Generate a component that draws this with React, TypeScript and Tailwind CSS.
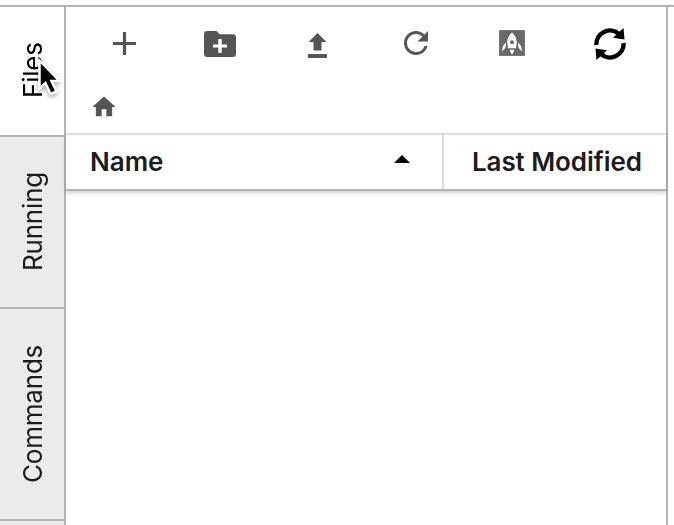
import React from "react";

function Tab({ label, className, textClass }: { label: string; className: string; textClass: string }) {
  return (
    <div className={`flex w-full shrink-0 justify-center border-b-2 border-[#b3b3b3] ${className}`}>
      <span className={`rotate-180 whitespace-nowrap text-[26px] leading-[32px] [writing-mode:vertical-rl] ${textClass}`}>{label}</span>
    </div>
  );
}

function Toolbar() {
  return (
    <div className="ml-[10px] grid h-[74px] w-[583px] shrink-0 grid-cols-6 items-center justify-items-center pb-[2px] text-[#555]">
      <svg className="mr-px h-[23px] w-[23px]" viewBox="0 0 23 23" fill="currentColor">
        <path d="M9.9 0h3.2v9.9H23v3.2h-9.9V23H9.9v-9.9H0V9.9h9.9z" />
      </svg>
      <svg className="mt-[2px] mr-[4px] h-[26px] w-[32px]" viewBox="0 0 32 26" fill="currentColor">
        <path fillRule="evenodd" d="M3 0h9.5l3.3 3.3H29a3 3 0 0 1 3 3V23a3 3 0 0 1-3 3H3a3 3 0 0 1-3-3V3a3 3 0 0 1 3-3zM14.3 8v5.4H9v3.2h5.3V22h3.4v-5.4H23v-3.2h-5.3V8z" />
      </svg>
      <svg className="mt-[4px] mr-[2px] h-[25px] w-[19px]" viewBox="0 0 19 25" fill="currentColor">
        <path d="M9.5 0 18.5 9h-5v8.6h-8V9h-5zM0 21h19v4H0z" />
      </svg>
      <svg className="h-[36px] w-[36px]" viewBox="0 0 24 24" fill="currentColor">
        <path d="M17.65 6.35A7.958 7.958 0 0 0 12 4c-4.42 0-7.99 3.58-7.99 8s3.57 8 7.99 8c3.73 0 6.84-2.55 7.73-6h-2.08A5.99 5.99 0 0 1 12 18c-3.31 0-6-2.69-6-6s2.69-6 6-6c1.66 0 3.14.69 4.22 1.78L13 11h7V4l-2.35 2.35z" />
      </svg>
      <svg className="mr-[2px] h-[26px] w-[26px]" viewBox="0 0 26 26">
        <path fill="#696969" stroke="#777" d="M.5.5h25v25H.5z" />
        <path fill="#fff" d="M13 2.5C9.8 5.5 8.2 9 8.2 12.5L9 18.2h8l.8-5.7C17.8 9 16.2 5.5 13 2.5zM7 12.8C4.2 14.7 3.1 17.5 2.9 21.5L6.6 17.7zM19 12.8c2.8 1.9 3.9 4.7 4.1 8.7l-3.7-3.8zM11 19.8h4l-.5 2.7L13 24.5l-1.5-2z" />
        <circle cx="13" cy="12.2" r="2" fill="#696969" />
      </svg>
      <svg className="mt-[2px] h-[32px] w-[32px]" viewBox="0 0 32 32">
        <path d="M2.4 17A13.6 13.6 0 0 1 25 6M29.6 15A13.6 13.6 0 0 1 7 26" fill="none" stroke="#000" strokeWidth="4.4" />
        <path d="m29.5 0 1 11.5L19 9.7zM2.5 32l-1-11.5L13 22.3z" fill="#000" />
      </svg>
    </div>
  );
}

export default function App() {
  return (
    <div className="relative flex h-[525px] w-[674px] flex-col overflow-hidden bg-white pt-[5px] font-['Inter','Liberation_Sans',sans-serif] text-[#1c1c1c]">
      <div className="h-[2px] shrink-0 bg-[#b3b3b3]" />
      <div className="flex min-h-0 flex-1">
        <div className="flex w-[66px] shrink-0 flex-col overflow-hidden border-r-2 border-[#b3b3b3] bg-[#ebebeb]">
          <Tab label="Files" className="h-[130px] bg-white pt-[35px] pl-[2px] text-black" textClass="h-[56px] tracking-[-0.2px]" />
          <Tab label="Running" className="h-[172px] pt-[32px] pl-[2px]" textClass="h-[102px] tracking-[-0.2px]" />
          <Tab label="Commands" className="h-[212px] pt-[34px] pl-[2px]" textClass="h-[140px] tracking-[-0.2px]" />
        </div>
        <main className="flex w-[602px] shrink-0 flex-col border-r-2 border-[#b3b3b3]">
          <Toolbar />
          <div className="flex h-[52px] shrink-0 items-center pl-[24px] text-[#555]">
            <svg className="h-[28px] w-[28px]" viewBox="0 0 24 24" fill="currentColor">
              <path d="M10 20v-6h4v6h5v-8h3L12 3 2 12h3v8z" />
            </svg>
          </div>
          <div className="flex h-[58px] shrink-0 border-t-2 border-b-2 border-t-[#dcdcdc] border-b-[#b3b3b3] text-[26px] leading-[54px] font-semibold shadow-[0_2px_4px_rgba(0,0,0,0.2)]">
            <div className="flex w-[378px] items-center justify-between border-r-2 border-[#dcdcdc] pr-[32px] pl-[24px]">
              <span>Name</span>
              <svg className="mb-[6px] h-[8px] w-[16px]" viewBox="0 0 16 8">
                <path d="M0 8 8 0l8 8z" fill="#000" />
              </svg>
            </div>
            <span className="pl-[28px] tracking-[-0.1px] whitespace-nowrap">Last Modified</span>
          </div>
        </main>
      </div>
      <svg className="absolute top-[54px] left-[34px] h-[48px] w-[34px] drop-shadow-[0_2px_2px_rgba(0,0,0,0.35)]" viewBox="0 0 34 48">
        <path d="M5.5 6.5v28l6-5.5 5 11 6-2.5-5-10.5h8z" fill="#000" stroke="#fff" strokeWidth="2.5" />
      </svg>
    </div>
  );
}
